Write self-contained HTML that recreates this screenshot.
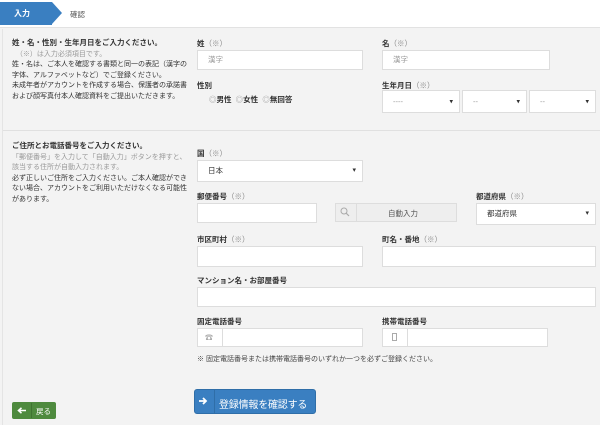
<!DOCTYPE html><html><head><meta charset="utf-8"><style>
*{box-sizing:border-box;margin:0;padding:0}
body{width:600px;height:425px;overflow:hidden;background:#f3f3f3;font-family:"Liberation Sans","Noto Sans CJK JP",sans-serif;font-size:8px;color:#333;position:relative}
.a{position:absolute}
.top{left:0;top:0;width:600px;height:28px;background:#fff;border-bottom:1px solid #e2e2e2}
.tab{left:0;top:2px;width:52px;height:23px;background:#3a7fc1;color:#fff;font-size:8px;line-height:23px;padding-left:14px;font-weight:bold}
.tab:after{content:"";position:absolute;right:-10px;top:0;border-left:10px solid #3a7fc1;border-top:11.5px solid transparent;border-bottom:11.5px solid transparent}
.lbl{font-size:7.5px;font-weight:bold;color:#333}
.lbl i{font-style:normal;color:#888;font-weight:normal}
.in{background:#fff;border:1px solid #ddd}
.ph{color:#999;font-size:7.5px;padding-left:10px}
.sel:after{content:"▾";position:absolute;right:6px;top:50%;transform:translateY(-50%);font-size:7px;color:#333}
.t{font-size:7px;line-height:10.5px;color:#333}
.g{color:#999}
</style></head><body>
<div class="a top"></div>
<div class="a tab">入力</div>
<div class="a" style="left:70px;top:9px;font-size:7.5px;color:#555">確認</div>
<div class="a" style="left:2px;top:29px;width:1px;height:396px;background:#e4e4e4"></div>
<div class="a" style="left:3px;top:130px;width:597px;height:1px;background:#e0e0e0"></div>

<div class="a t" style="left:12px;top:38px;width:178px">
<b style="font-size:7.5px">姓・名・性別・生年月日をご入力ください。</b><br><span class="g">&nbsp;&nbsp;（※）は入力必須項目です。</span><br>姓・名は、ご本人を確認する書類と同一の表記（漢字の字体、アルファベットなど）でご登録ください。<br>未成年者がアカウントを作成する場合、保護者の承諾書および顔写真付本人確認資料をご提出いただきます。</div>

<div class="a lbl" style="left:197px;top:38px">姓<i>（※）</i></div>
<div class="a in" style="left:197px;top:50px;width:166px;height:20px;line-height:18px"><span class="ph">漢字</span></div>
<div class="a lbl" style="left:382px;top:38px">名<i>（※）</i></div>
<div class="a in" style="left:382px;top:50px;width:168px;height:20px;line-height:18px"><span class="ph">漢字</span></div>
<div class="a lbl" style="left:197px;top:80px">性別</div>
<div class="a" style="left:209px;top:94px;font-size:7.5px;font-weight:bold"><span style="color:#999;font-weight:normal">◎</span>男性 &nbsp;<span style="color:#999;font-weight:normal">◎</span>女性 &nbsp;<span style="color:#999;font-weight:normal">◎</span>無回答</div>
<div class="a lbl" style="left:382px;top:80px">生年月日<i>（※）</i></div>
<div class="a in sel" style="left:382px;top:90px;width:78px;height:23px;line-height:21px"><span class="ph">----</span></div>
<div class="a in sel" style="left:462px;top:90px;width:65px;height:23px;line-height:21px"><span class="ph">--</span></div>
<div class="a in sel" style="left:529px;top:90px;width:67px;height:23px;line-height:21px"><span class="ph">--</span></div>

<div class="a t" style="left:12px;top:141px;width:180px">
<b style="font-size:7.5px">ご住所とお電話番号をご入力ください。</b><br><span class="g">「郵便番号」を入力して「自動入力」ボタンを押すと、該当する住所が自動入力されます。</span><br>必ず正しいご住所をご入力ください。ご本人確認ができない場合、アカウントをご利用いただけなくなる可能性があります。</div>

<div class="a lbl" style="left:197px;top:148px">国<i>（※）</i></div>
<div class="a in sel" style="left:197px;top:160px;width:166px;height:22px;line-height:20px"><span class="ph" style="color:#333">日本</span></div>
<div class="a lbl" style="left:197px;top:191px">郵便番号<i>（※）</i></div>
<div class="a in" style="left:197px;top:203px;width:120px;height:20px"></div>
<div class="a" style="left:335px;top:203px;width:122px;height:19px;background:#eee;border:1px solid #ddd"></div>
<div class="a" style="left:356px;top:203px;width:1px;height:19px;background:#ddd"></div>
<svg class="a" style="left:340px;top:207px" width="10" height="10" viewBox="0 0 10 10"><circle cx="4" cy="4" r="3" fill="none" stroke="#aaa" stroke-width="1"/><path d="M6.2 6.2L9 9" stroke="#aaa" stroke-width="1.2"/></svg>
<div class="a" style="left:388px;top:208px;font-size:7.5px;color:#555">自動入力</div>
<div class="a lbl" style="left:476px;top:191px">都道府県<i>（※）</i></div>
<div class="a in sel" style="left:476px;top:203px;width:120px;height:22px;line-height:20px"><span class="ph" style="color:#333">都道府県</span></div>
<div class="a lbl" style="left:197px;top:234px">市区町村<i>（※）</i></div>
<div class="a in" style="left:197px;top:246px;width:166px;height:21px"></div>
<div class="a lbl" style="left:382px;top:234px">町名・番地<i>（※）</i></div>
<div class="a in" style="left:382px;top:246px;width:214px;height:21px"></div>
<div class="a lbl" style="left:197px;top:275px">マンション名・お部屋番号</div>
<div class="a in" style="left:197px;top:287px;width:399px;height:20px"></div>
<div class="a lbl" style="left:197px;top:316px">固定電話番号</div>
<div class="a in" style="left:197px;top:328px;width:166px;height:19px"></div>
<div class="a" style="left:222px;top:328px;width:1px;height:19px;background:#ddd"></div>
<div class="a" style="left:205px;top:332px;font-size:8px;color:#aaa">☎</div>
<div class="a lbl" style="left:382px;top:316px">携帯電話番号</div>
<div class="a in" style="left:382px;top:328px;width:166px;height:19px"></div>
<div class="a" style="left:407px;top:328px;width:1px;height:19px;background:#ddd"></div>
<div class="a" style="left:392px;top:333px;width:5px;height:8px;border:1px solid #aaa"></div>
<div class="a" style="left:197px;top:354px;font-size:7px;color:#444">※ 固定電話番号または携帯電話番号のいずれか一つを必ずご登録ください。</div>

<div class="a" style="left:194px;top:389px;width:122px;height:25px;background:#3a7fc1;border:1px solid #2f6ea8;border-radius:3px"></div>
<div class="a" style="left:214px;top:390px;width:1px;height:23px;background:#2f6ea8"></div>
<svg class="a" style="left:199px;top:397px" width="9" height="8" viewBox="0 0 9 8"><path d="M0 4H7M4 1L7 4L4 7" stroke="#fff" stroke-width="1.8" fill="none"/></svg>
<div class="a" style="left:219px;top:396px;color:#fff;font-size:10px;letter-spacing:-0.2px">登録情報を確認する</div>

<div class="a" style="left:12px;top:402px;width:44px;height:17px;background:#4e8a3e;border-radius:2px"></div>
<div class="a" style="left:31px;top:403px;width:1px;height:15px;background:#3f7331"></div>
<svg class="a" style="left:17px;top:407px" width="9" height="7" viewBox="0 0 9 7"><path d="M9 3.5H2M4.5 0.8L1.5 3.5L4.5 6.2" stroke="#fff" stroke-width="1.6" fill="none"/></svg>
<div class="a" style="left:36px;top:406px;color:#fff;font-size:7.5px">戻る</div>
</body></html>
